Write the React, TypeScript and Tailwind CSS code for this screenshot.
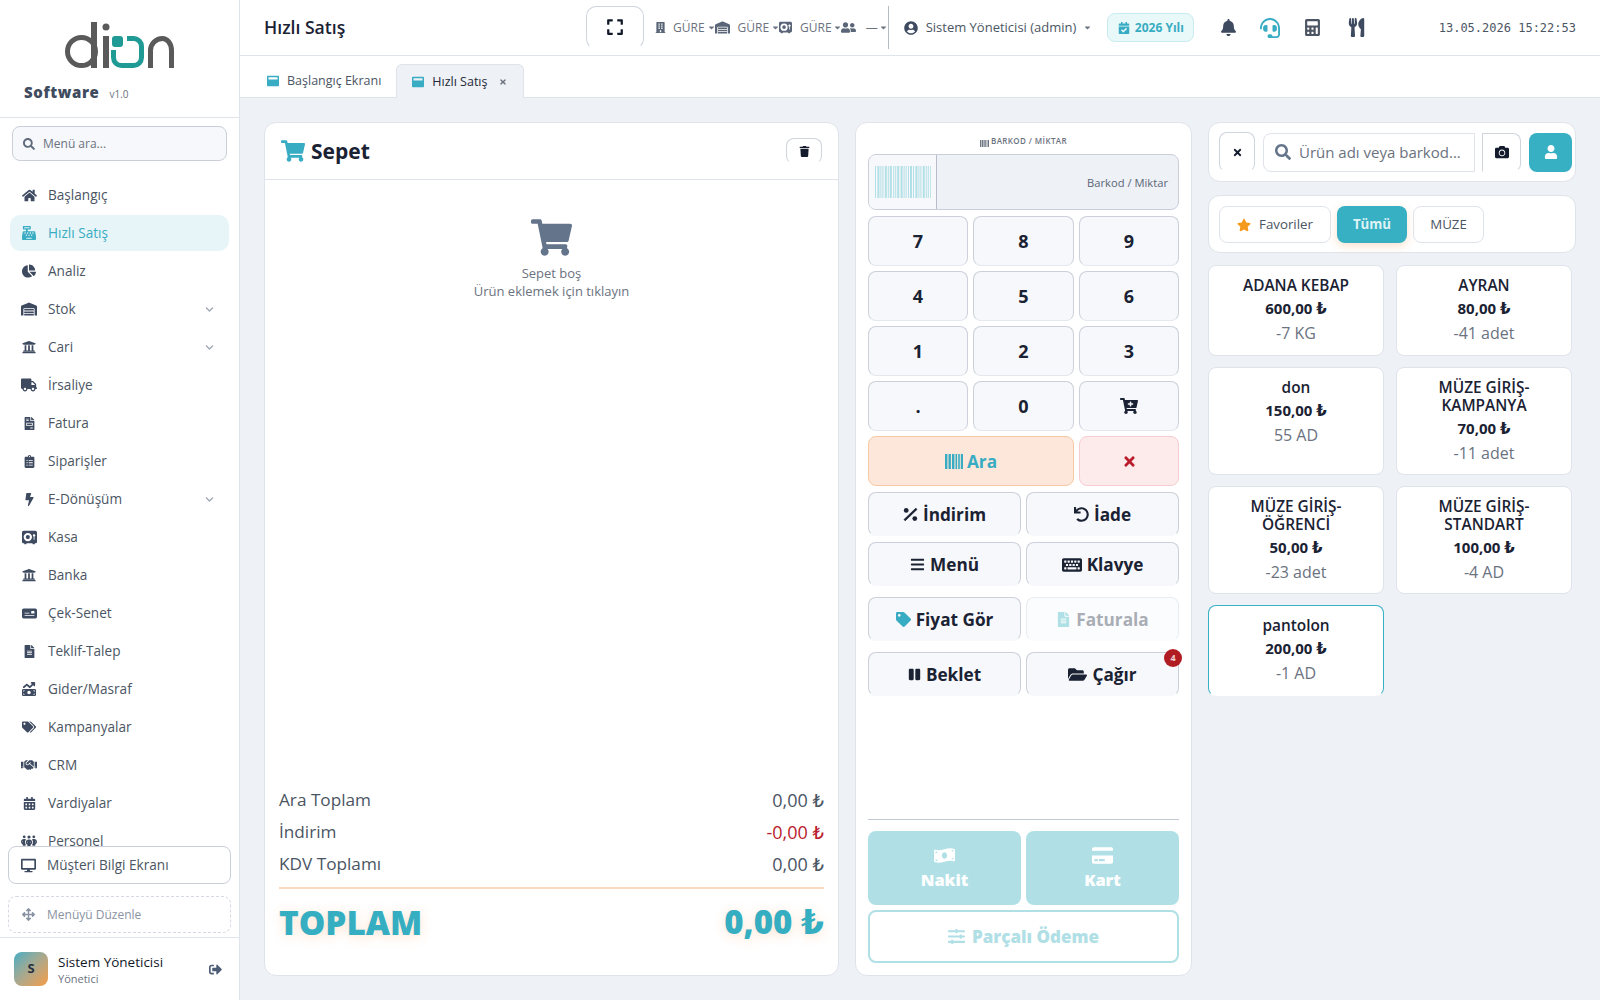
import React from "react";
import {
  FaHome, FaCashRegister, FaChartPie, FaWarehouse, FaUniversity, FaTruck, FaFileInvoice, FaClipboardList, FaBolt,
  FaFileAlt, FaTags, FaHandshake, FaCalendarAlt, FaDesktop, FaArrowsAlt, FaSignOutAlt, FaExpand,
  FaBuilding, FaUserCircle, FaCalendarCheck, FaBell, FaHeadset, FaCalculator, FaUtensils, FaShoppingCart, FaTrash,
  FaCartPlus, FaTimes, FaUndo, FaBars, FaKeyboard, FaTag, FaPause, FaFolderOpen, FaMoneyBillWave,
  FaCreditCard, FaSlidersH, FaSearch, FaCamera, FaUser, FaStar, FaCaretDown, FaChevronDown, FaWindowMaximize, FaUserFriends,
} from "react-icons/fa";
import { FaVault, FaMoneyBillTrendUp, FaPeopleGroup, FaMoneyCheck } from "react-icons/fa6";

const menu: { label: string; icon: React.ReactNode; chevron?: boolean; active?: boolean }[] = [
  { label: "Başlangıç", icon: <FaHome size={15} /> },
  { label: "Hızlı Satış", icon: <FaCashRegister size={14} />, active: true },
  { label: "Analiz", icon: <FaChartPie size={14} /> },
  { label: "Stok", icon: <FaWarehouse size={16} />, chevron: true },
  { label: "Cari", icon: <FaUniversity size={14} />, chevron: true },
  { label: "İrsaliye", icon: <FaTruck size={16} /> },
  { label: "Fatura", icon: <FaFileInvoice size={13} /> },
  { label: "Siparişler", icon: <FaClipboardList size={13} /> },
  { label: "E-Dönüşüm", icon: <FaBolt size={13} />, chevron: true },
  { label: "Kasa", icon: <FaVault size={15} /> },
  { label: "Banka", icon: <FaUniversity size={14} /> },
  { label: "Çek-Senet", icon: <FaMoneyCheck size={15} /> },
  { label: "Teklif-Talep", icon: <FaFileAlt size={13} /> },
  { label: "Gider/Masraf", icon: <FaMoneyBillTrendUp size={14} /> },
  { label: "Kampanyalar", icon: <FaTags size={14} /> },
  { label: "CRM", icon: <FaHandshake size={16} /> },
  { label: "Vardiyalar", icon: <FaCalendarAlt size={13} /> },
  { label: "Personel", icon: <FaPeopleGroup size={16} /> },
];

const products = [
  { name: "ADANA KEBAP", price: "600,00", stock: "-7 KG", h: "h-[91px]" },
  { name: "AYRAN", price: "80,00", stock: "-41 adet", h: "h-[91px]" },
  { name: "don", price: "150,00", stock: "55 AD", h: "h-[108px]" },
  { name: "MÜZE GİRİŞ-KAMPANYA", price: "70,00", stock: "-11 adet", h: "h-[108px]" },
  { name: "MÜZE GİRİŞ-ÖĞRENCİ", price: "50,00", stock: "-23 adet", h: "h-[108px]" },
  { name: "MÜZE GİRİŞ-STANDART", price: "100,00", stock: "-4 AD", h: "h-[108px]" },
  { name: "pantolon", price: "200,00", stock: "-1 AD", h: "h-[91px]", sel: true },
];

const barWidths = [1, 2, 1, 1, 2, 1, 2, 1, 1, 2, 2, 1, 1, 1, 2, 1, 2, 1, 1, 2, 1, 1, 2, 1, 2];

function Tl() {
  return <span className="font-['DejaVu_Sans',sans-serif]">₺</span>;
}

function Bars({ w, h }: { w: number; h: number }) {
  return (
    <svg width={w} height={h} viewBox="0 0 18 16" fill="currentColor" preserveAspectRatio="none">
      <rect x="0" y="0" width="2.4" height="16" />
      <rect x="3.5" y="0" width="2.4" height="16" />
      <rect x="7" y="0" width="2.4" height="16" />
      <rect x="10.5" y="0" width="1.6" height="16" />
      <rect x="13.2" y="0" width="1.6" height="16" />
      <rect x="15.8" y="0" width="2.2" height="16" />
    </svg>
  );
}

function PercentIcon() {
  return (
    <svg width="15" height="15" viewBox="0 0 15 15" fill="currentColor">
      <circle cx="3.2" cy="3.4" r="2.4" />
      <circle cx="11.8" cy="11.6" r="2.4" />
      <path d="M12.8 1.2 14 2.4 2.2 13.8 1 12.6Z" stroke="currentColor" strokeWidth="0.8" />
    </svg>
  );
}

function Logo() {
  return (
    <svg viewBox="60 18 120 54" width="120" height="54" fill="none">
      <circle cx="81.5" cy="51.5" r="14" stroke="#5a5a5a" strokeWidth="5" />
      <rect x="91" y="22" width="6" height="46" fill="#5a5a5a" />
      <circle cx="106" cy="27" r="3.5" fill="#5a5a5a" />
      <rect x="103" y="36" width="6" height="32" fill="#5a5a5a" />
      <path d="M127 38.5H134A8 8 0 0 1 141.5 46.5V57.5A8 8 0 0 1 133.5 65.5H121.5A8 8 0 0 1 113.5 57.5V50" stroke="#1f9a94" strokeWidth="5" />
      <rect x="112" y="36" width="11" height="11" rx="3" fill="#1f9a94" />
      <path d="M150.5 68V50.5A12 12 0 0 1 162.5 38.5A9 12 0 0 1 171.5 50.5V68" stroke="#5a5a5a" strokeWidth="5" />
    </svg>
  );
}

function Sidebar() {
  return (
    <aside className="flex h-[1000px] w-[240px] shrink-0 flex-col border-r border-[#dfe3ea] bg-white">
      <div className="h-[118px] shrink-0 border-b border-[#dfe3ea]">
        <div className="flex justify-center pt-[18px]"><Logo /></div>
        <div className="mt-[9px] flex items-baseline pl-[24px]">
          <span className="text-[15px] font-extrabold tracking-[0.6px] text-[#3f4b5f]">Software</span>
          <span className="ml-[10px] text-[10px] text-[#6b7280]">v1.0</span>
        </div>
      </div>
      <div className="shrink-0 px-[12px] pt-[8px]">
        <div className="flex h-[35px] items-center rounded-[8px] border border-[#c9ced8] bg-[#f6f8fb] pl-[10px]">
          <FaSearch size={12} className="text-[#5f6b7c]" />
          <span className="ml-[8px] text-[12px] text-[#6b7280]">Menü ara...</span>
        </div>
      </div>
      <nav className="min-h-0 flex-1 overflow-hidden pt-[16px]">
        {menu.map((m) => (
          <div key={m.label} className={`mx-[10px] mb-[2px] flex h-[36px] w-[219px] shrink-0 items-center rounded-[10px] ${m.active ? "bg-[#e7f5f9] text-[#38acc2]" : "text-[#4b5563]"}`}>
            <span className={`flex w-[38px] shrink-0 justify-center ${m.active ? "text-[#38acc2]" : "text-[#3e4a60]"}`}>{m.icon}</span>
            <span className="text-[13.6px]">{m.label}</span>
            {m.chevron && <FaChevronDown size={9} className="ml-auto mr-[15px] text-[#a3a9b5]" />}
          </div>
        ))}
      </nav>
      <div className="shrink-0 px-[8px]">
        <div className="flex h-[38px] items-center rounded-[8px] border border-[#c9ced8] bg-white pl-[12px]">
          <FaDesktop size={15} className="text-[#3e4a60]" />
          <span className="ml-[11px] text-[13.6px] text-[#4b5563]">Müşteri Bilgi Ekranı</span>
        </div>
        <div className="mt-[12px] flex h-[37px] items-center rounded-[8px] border border-dashed border-[#d5d9e1] pl-[13px]">
          <FaArrowsAlt size={13} className="text-[#8a93a3]" />
          <span className="ml-[12px] text-[12px] text-[#8a93a3]">Menüyü Düzenle</span>
        </div>
      </div>
      <div className="mt-[4px] flex h-[63px] shrink-0 items-center border-t border-[#dfe3ea] pl-[14px]">
        <div className="flex h-[34px] w-[34px] items-center justify-center rounded-[8px] bg-gradient-to-br from-[#38acc2] to-[#f59a3c] text-[13px] font-bold text-[#27303f]">S</div>
        <div className="ml-[10px] flex flex-col pt-[2px]">
          <span className="text-[13.5px] font-medium leading-[17px] text-[#111827]">Sistem Yöneticisi</span>
          <span className="text-[11px] leading-[15px] text-[#6b7280]">Yönetici</span>
        </div>
        <FaSignOutAlt size={13} className="ml-auto mr-[17px] text-[#4b5c74]" />
      </div>
    </aside>
  );
}

function Caret({ className = "" }: { className?: string }) {
  return <FaCaretDown size={9} className={`shrink-0 text-[#6b7280] ${className}`} />;
}

function Header() {
  return (
    <header className="flex h-[56px] shrink-0 items-center border-b border-[#dfe3ea] bg-white pl-[24px] pr-[24px]">
      <div className="w-[322px] shrink-0 text-[17.6px] font-semibold text-[#1a2233]">Hızlı Satış</div>
      <div className="mb-[1px] flex h-[43px] w-[58px] shrink-0 items-center justify-center self-center rounded-[10px] border border-[#cfd4dd] border-b-transparent bg-white text-[#111827]">
        <FaExpand size={18} />
      </div>
      <div className="ml-[11px] flex items-center text-[12px] text-[#6b7280]">
        <FaBuilding size={11} className="text-[#5a6577]" />
        <span className="ml-[7px]">GÜRE</span>
        <Caret className="ml-[2px] mr-[-1px]" />
        <FaWarehouse size={15} className="text-[#5a6577]" />
        <span className="ml-[8px]">GÜRE</span>
        <Caret className="ml-[2px] mr-[-1px]" />
        <FaVault size={13} className="text-[#5a6577]" />
        <span className="ml-[8px]">GÜRE</span>
        <Caret className="ml-[1px] mr-[-1px]" />
        <FaUserFriends size={15} className="text-[#5a6577]" />
        <span className="ml-[10px]">—</span>
        <Caret className="ml-[1px]" />
      </div>
      <div className="h-[43px] w-px shrink-0 bg-[#b5bac4]" />
      <FaUserCircle size={14} className="ml-[15px] shrink-0 text-[#3e4a60]" />
      <span className="ml-[8px] whitespace-nowrap text-[13px] text-[#4b5563]">Sistem Yöneticisi (admin)</span>
      <Caret className="ml-[7px]" />
      <div className="ml-[15px] flex h-[29px] w-[87px] shrink-0 items-center justify-center rounded-[8px] border border-[#c8ecf0] bg-[#e9f8f9] text-[12px] font-bold text-[#38acc2]">
        <FaCalendarCheck size={12} className="mr-[5px]" />2026 Yılı
      </div>
      <FaBell size={17} className="ml-[26px] shrink-0 text-[#3e4a60]" />
      <FaHeadset size={20} className="ml-[23px] shrink-0 text-[#38acc2]" />
      <FaCalculator size={17} className="ml-[24px] shrink-0 text-[#4b5563]" />
      <FaUtensils size={19} className="ml-[26px] shrink-0 text-[#3e4a60]" />
      <span className="ml-auto font-['DejaVu_Sans_Mono',monospace] text-[12px] text-[#4b5563]">13.05.2026 15:22:53</span>
    </header>
  );
}

function Tabs() {
  return (
    <div className="flex h-[42px] shrink-0 items-end border-b border-[#dfe3ea] bg-white pl-[27px]">
      <div className="flex h-[33px] items-center pt-[1px] text-[12.5px] text-[#4b5563]">
        <FaWindowMaximize size={12} className="text-[#38acc2]" />
        <span className="ml-[8px]">Başlangıç Ekranı</span>
      </div>
      <div className="relative top-[1px] ml-[15px] flex h-[34px] w-[128px] items-center rounded-t-[6px] border border-b-0 border-[#dfe3ea] bg-[#eef1f6] pl-[15px] pt-[1px] text-[12.5px] font-medium text-[#1f2937]">
        <FaWindowMaximize size={12} className="text-[#38acc2]" />
        <span className="ml-[8px]">Hızlı Satış</span>
        <FaTimes size={8} className="ml-[12px] text-[#6b7280]" />
      </div>
    </div>
  );
}

function Sepet() {
  return (
    <section className="flex w-[575px] shrink-0 flex-col rounded-[12px] border border-[#dfe3ea] bg-white">
      <div className="flex h-[57px] shrink-0 items-center border-b border-[#dfe3ea] pl-[16px] pr-[16px]">
        <FaShoppingCart size={24} className="text-[#38acc2]" />
        <span className="ml-[6px] pt-[1px] text-[21px] font-bold text-[#1a2233]">Sepet</span>
        <div className="ml-auto flex h-[26px] w-[36px] items-center justify-center rounded-[8px] border border-[#cfd4dd] border-b-transparent">
          <FaTrash size={11} className="text-[#141b2d]" />
        </div>
      </div>
      <div className="flex flex-col items-center pt-[37px]">
        <FaShoppingCart size={41} className="text-[#64748b]" />
        <span className="mt-[6px] text-[13px] leading-[18px] text-[#6b7280]">Sepet boş</span>
        <span className="text-[13px] leading-[18px] text-[#6b7280]">Ürün eklemek için tıklayın</span>
      </div>
      <div className="mt-auto px-[14px] pb-[25px]">
        <div className="flex h-[32px] items-center justify-between text-[17.2px] text-[#4b5563]"><span>Ara Toplam</span><span className="text-[18px]">0,00 <Tl /></span></div>
        <div className="flex h-[32px] items-center justify-between text-[17.2px] text-[#4b5563]"><span>İndirim</span><span className="text-[18px] text-[#b91c2c]">-0,00 <Tl /></span></div>
        <div className="flex h-[32px] items-center justify-between text-[17.2px] text-[#4b5563]"><span>KDV Toplamı</span><span className="text-[18px]">0,00 <Tl /></span></div>
        <div className="mt-[7px] h-[2px] bg-[#f8d9bd]" />
        <div className="mt-[5px] flex h-[56px] items-center justify-between text-[33.4px] font-extrabold text-[#36aec2] [text-shadow:0_2px_12px_rgba(245,158,90,0.3)]">
          <span>TOPLAM</span><span className="text-[33px]">0,00 <Tl /></span>
        </div>
      </div>
    </section>
  );
}

const keyCls = "flex h-[50px] items-center justify-center rounded-[8px] border border-[#cbd0da] border-b-[#e4e7ed] bg-[#f7f8fb] text-[18px] font-bold text-[#1a2233]";
const actCls = "flex h-[44px] w-[153px] items-center justify-center gap-[5px] rounded-[8px] border border-[#cbd0da] border-b-transparent bg-[#f7f8fb] pt-[1px] text-[17.2px] font-bold text-[#1a2233]";

function Numpad() {
  const keys: React.ReactNode[] = ["7", "8", "9", "4", "5", "6", "1", "2", "3", ".", "0", <FaCartPlus size={18} />];
  return (
    <section className="flex w-[337px] shrink-0 flex-col rounded-[12px] border border-[#dfe3ea] bg-white px-[12px] pb-[12px]">
      <div className="flex h-[31px] shrink-0 items-end justify-center pb-[7px] text-[8px] font-semibold tracking-[0.4px] text-[#6b7280]">
        <span className="mr-[2px] text-[#6b7280]"><Bars w={9} h={7} /></span>BARKOD / MİKTAR
      </div>
      <div className="flex h-[56px] shrink-0 overflow-hidden rounded-[8px] border border-[#c9ced8] bg-[#eef1f6]">
        <div className="flex w-[68px] shrink-0 items-center justify-center border-r border-[#b8bec9] bg-[#f7f8fb]">
          <svg width="56" height="32" viewBox="0 0 56 32">
            {barWidths.reduce<{ x: number; els: React.ReactNode[] }>((acc, w, i) => {
              acc.els.push(<rect key={i} x={acc.x} y="0" width={w} height="32" fill="#b2e0e7" />);
              return { x: acc.x + w + (i % 3 === 0 ? 1.4 : 1), els: acc.els };
            }, { x: 0, els: [] }).els}
          </svg>
        </div>
        <div className="flex flex-1 items-center justify-end pr-[10px] pt-[2px] text-[11.2px] text-[#5b6677]">Barkod / Miktar</div>
      </div>
      <div className="mt-[6px] grid shrink-0 grid-cols-[100px_101px_100px] gap-x-[5px] gap-y-[5px]">
        {keys.map((k, i) => (<div key={i} className={keyCls}>{k}</div>))}
        <div className="col-span-2 flex h-[50px] items-center justify-center gap-[4px] rounded-[8px] border border-[#f6c9a2] bg-[#fde7da] pt-[1px] text-[17.2px] font-bold text-[#38acc2]">
          <Bars w={18} h={15} />Ara
        </div>
        <div className="flex h-[50px] items-center justify-center rounded-[8px] border border-[#f6cdd1] bg-[#fdeaea] text-[#b91c2c]"><FaTimes size={15} /></div>
      </div>
      <div className="mt-[6px] flex shrink-0 justify-between"><div className={actCls}><PercentIcon />İndirim</div><div className={actCls}><FaUndo size={15} />İade</div></div>
      <div className="mt-[6px] flex shrink-0 justify-between"><div className={actCls}><FaBars size={15} />Menü</div><div className={actCls}><FaKeyboard size={20} />Klavye</div></div>
      <div className="mt-[11px] flex shrink-0 justify-between">
        <div className={actCls}><FaTag size={15} className="text-[#38acc2]" />Fiyat Gör</div>
        <div className="flex h-[44px] w-[153px] items-center justify-center gap-[5px] rounded-[8px] border border-[#e9ecf1] border-b-transparent bg-[#fbfcfd] pt-[1px] text-[17.2px] font-bold text-[#a9adb5]">
          <FaFileAlt size={15} className="text-[#aee0e6]" />Faturala
        </div>
      </div>
      <div className="mt-[11px] flex shrink-0 justify-between">
        <div className={actCls}><FaPause size={13} />Beklet</div>
        <div className={`${actCls} relative`}>
          <FaFolderOpen size={19} />Çağır
          <span className="absolute right-[-4px] top-[-4px] flex h-[18px] w-[18px] items-center justify-center rounded-full bg-[#b01c22] text-[9px] font-bold text-white/80">4</span>
        </div>
      </div>
      <div className="mt-auto h-px shrink-0 bg-[#c2cad6]" />
      <div className="mt-[11px] flex shrink-0 justify-between">
        {[{ t: "Nakit", i: <FaMoneyBillWave size={21} /> }, { t: "Kart", i: <FaCreditCard size={21} /> }].map((b) => (
          <div key={b.t} className="flex h-[74px] w-[153px] flex-col items-center justify-center rounded-[8px] bg-[#b0e0e6] pb-[1px] text-white">
            {b.i}
            <span className="mt-[3px] text-[16.4px] font-extrabold leading-[22px]">{b.t}</span>
          </div>
        ))}
      </div>
      <div className="mt-[5px] flex h-[53px] shrink-0 items-center justify-center gap-[7px] rounded-[8px] border-2 border-[#b0e0e6] text-[17px] font-extrabold text-[#b0e0e6]">
        <FaSlidersH size={17} />Parçalı Ödeme
      </div>
    </section>
  );
}

function RightPane() {
  return (
    <section className="flex w-[368px] shrink-0 flex-col">
      <div className="flex h-[60px] shrink-0 items-center rounded-[12px] border border-[#dfe3ea] bg-white pl-[10px]">
        <div className="flex h-[40px] w-[36px] items-center justify-center rounded-[8px] border border-[#cfd4dd] border-b-transparent text-[#141b2d]"><FaTimes size={11} /></div>
        <div className="ml-[8px] flex h-[39px] w-[212px] items-center rounded-l-[8px] border border-[#dfe3ea] pl-[11px]">
          <FaSearch size={16} className="text-[#64748b]" />
          <span className="ml-[8px] text-[15px] text-[#6b7280]">Ürün adı veya barkod...</span>
        </div>
        <div className="ml-[7px] flex h-[39px] w-[39px] items-center justify-center rounded-r-[8px] border border-[#cfd4dd] border-b-transparent text-[#141b2d]"><FaCamera size={14} /></div>
        <div className="ml-[8px] flex h-[39px] w-[43px] items-center justify-center rounded-[8px] bg-[#38b0c4] text-white"><FaUser size={14} /></div>
      </div>
      <div className="mt-[13px] flex h-[58px] shrink-0 items-center gap-[6px] rounded-[12px] border border-[#dfe3ea] bg-white pl-[10px]">
        <div className="flex h-[37px] w-[112px] items-center justify-center rounded-[8px] border border-[#dfe3ea] pt-[1px] text-[13.3px] font-medium text-[#4b5563]">
          <FaStar size={14} className="mr-[8px] text-[#f59a1c]" />Favoriler
        </div>
        <div className="flex h-[37px] w-[70px] items-center justify-center rounded-[8px] bg-[#38b0c4] pt-[1px] text-[13.3px] font-bold text-[#dff3f6] shadow-[0_3px_8px_rgba(245,158,90,0.3)]">Tümü</div>
        <div className="flex h-[37px] w-[71px] items-center justify-center rounded-[8px] border border-[#dfe3ea] pt-[1px] text-[13.3px] font-medium text-[#4b5563]">MÜZE</div>
      </div>
      <div className="mt-[12px] grid w-[364px] grid-cols-[176px_176px] items-start gap-x-[12px] gap-y-[11px]">
        {products.map((p) => (
          <div key={p.name} className={`flex ${p.h} flex-col items-center rounded-[8px] border bg-white px-[16px] pt-[11px] text-center ${p.sel ? "border-[#38b0c4] border-b-transparent" : "border-[#dfe3ea]"}`}>
            <div className="text-[15.4px] font-semibold leading-[18px] text-[#1a2233]">{p.name}</div>
            <div className="mt-[4px] text-[15px] font-bold leading-[18px] text-[#1a2233]">{p.price} <Tl /></div>
            <div className="mt-[4px] text-[16px] leading-[22px] text-[#6b7280]">{p.stock}</div>
          </div>
        ))}
      </div>
    </section>
  );
}

export default function App() {
  return (
    <div className="flex h-[1000px] w-[1600px] overflow-hidden bg-[#eef1f6] font-['Open_Sans','Noto_Sans',sans-serif]">
      <Sidebar />
      <main className="flex min-w-0 flex-1 flex-col">
        <Header />
        <Tabs />
        <div className="flex min-h-0 flex-1 gap-[16px] pb-[24px] pl-[24px] pt-[24px]">
          <Sepet />
          <Numpad />
          <RightPane />
        </div>
      </main>
    </div>
  );
}
